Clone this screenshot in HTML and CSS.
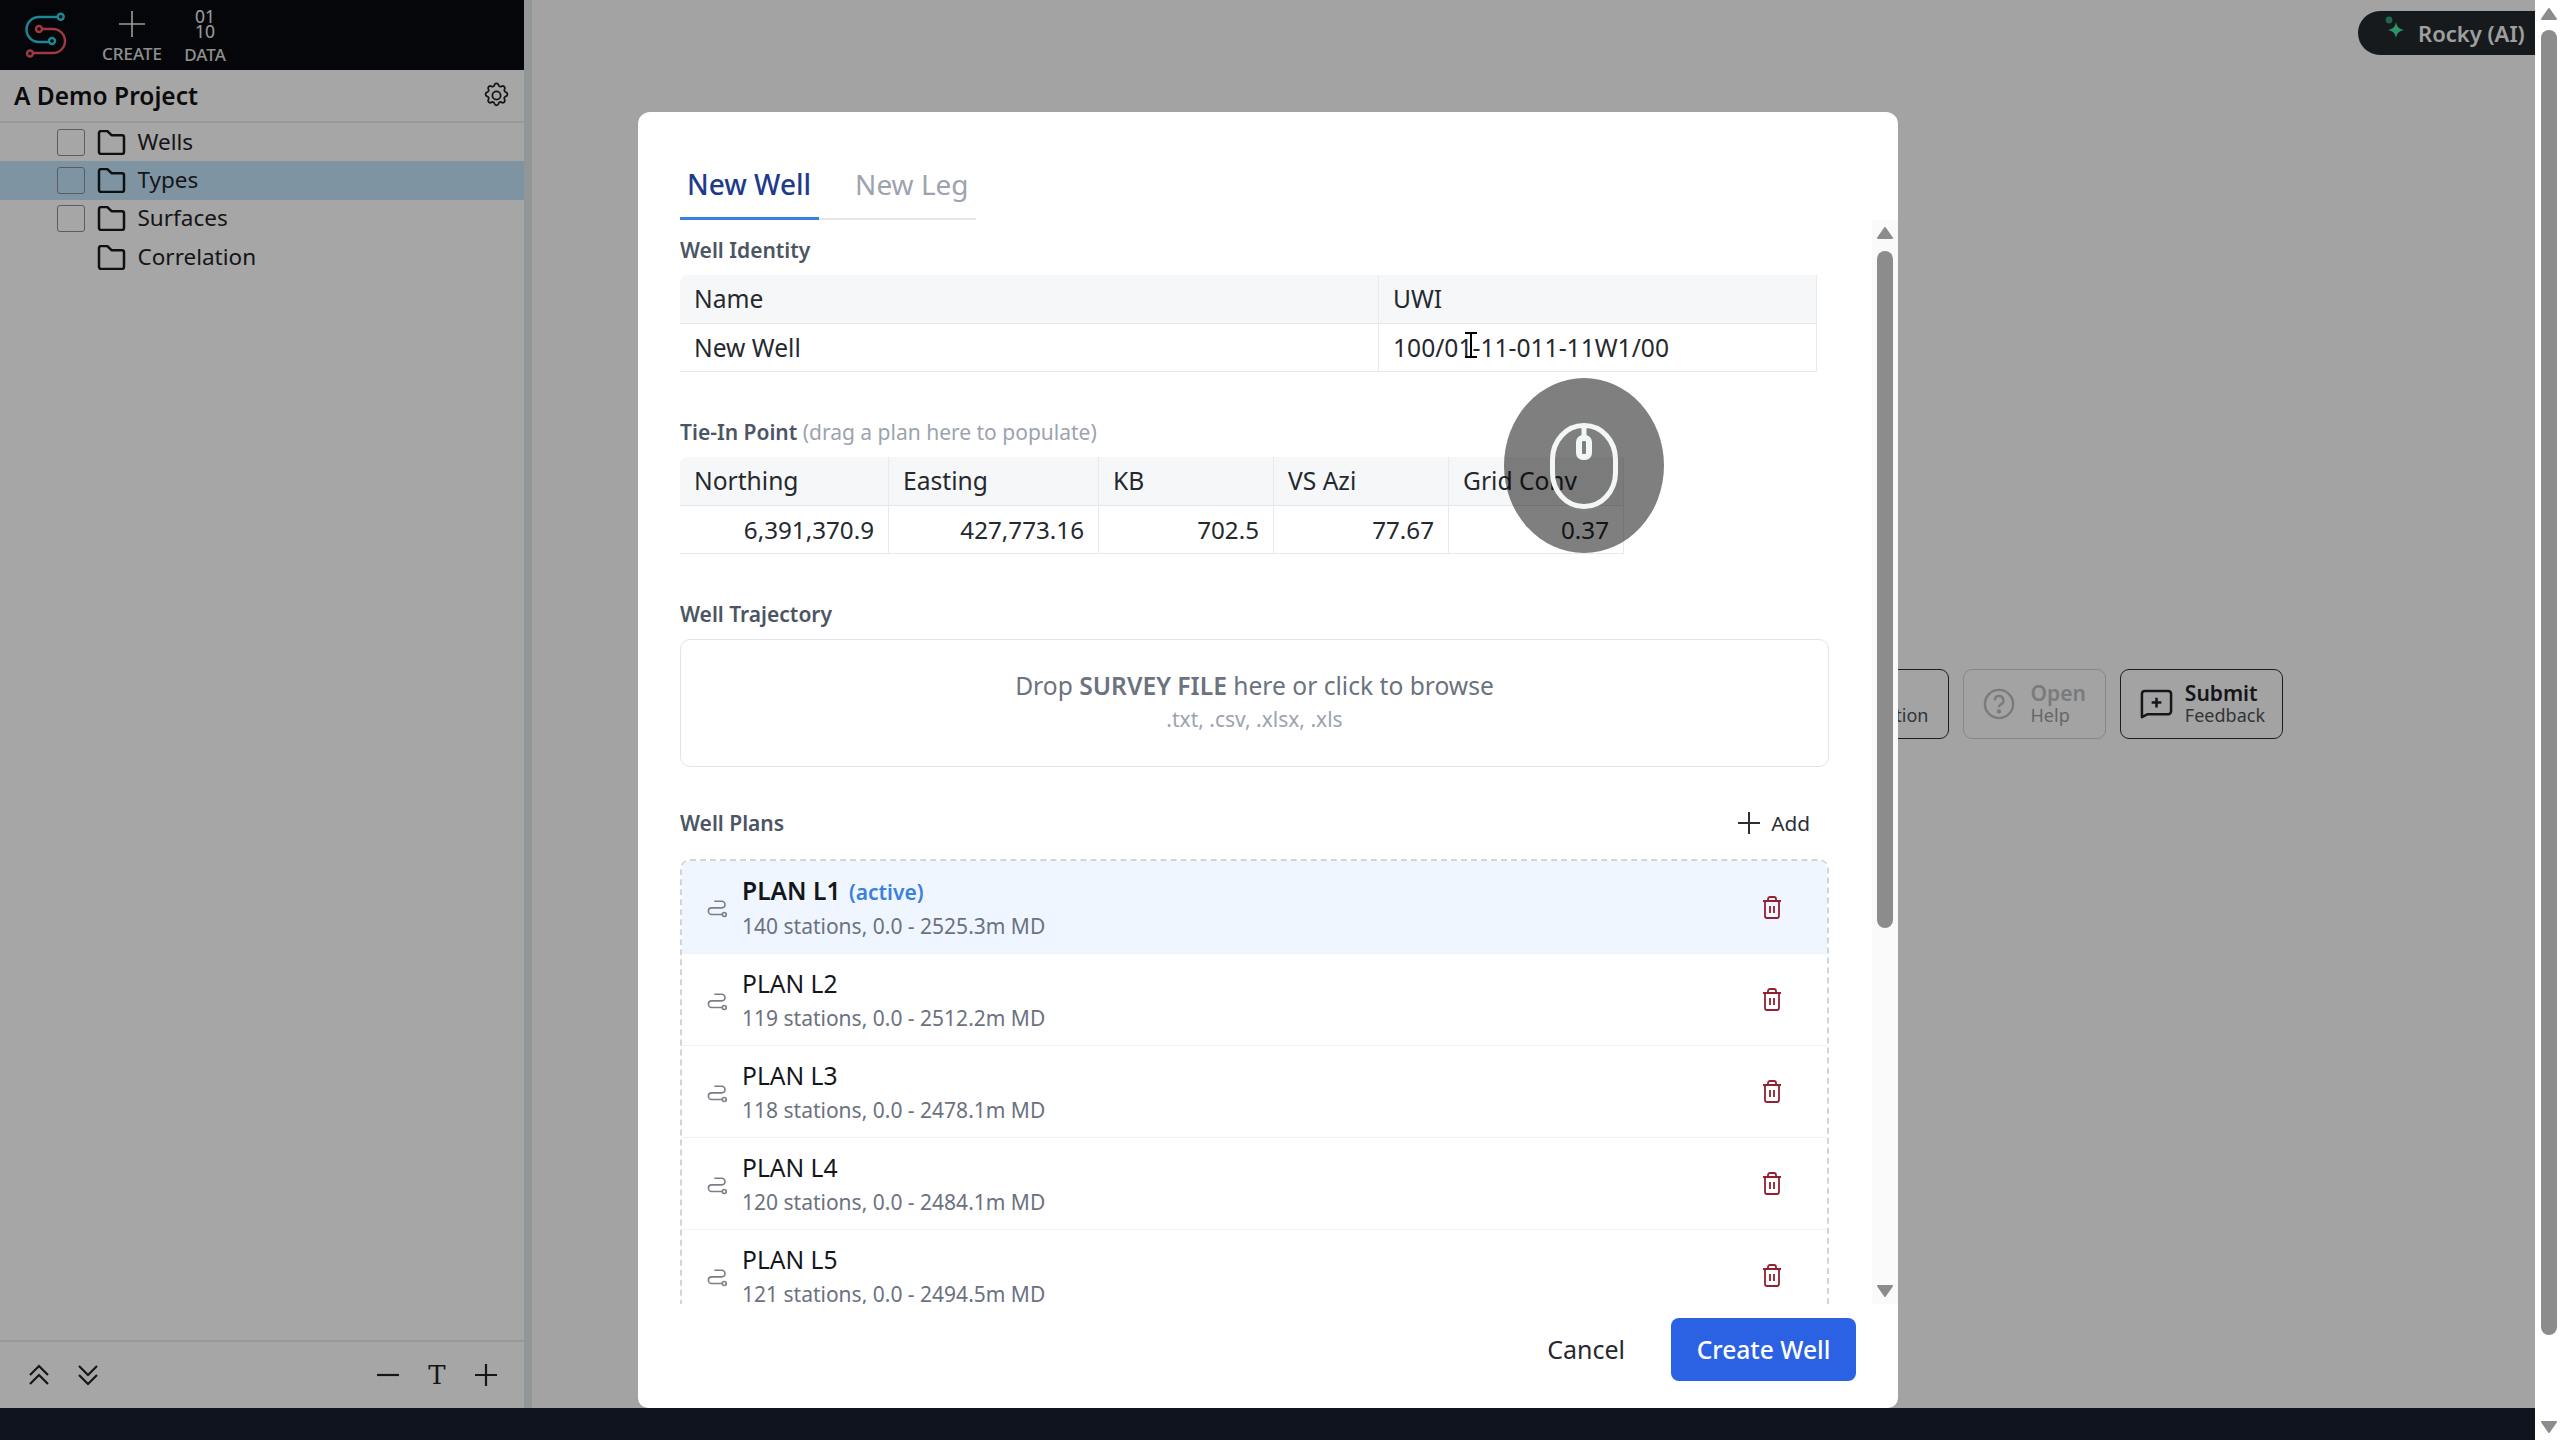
FILE: index.html
```html
<!DOCTYPE html>
<html lang="en">
<head>
<meta charset="utf-8">
<title>New Well</title>
<link rel="stylesheet" href="styles.css">
</head>
<body>
<div class="page">
  <div class="app">
    <div class="workspace">
      <aside class="sidebar">
        <div class="topbar">
          <svg class="logo" viewBox="0 0 70 70" width="70" height="70" fill="none" stroke-width="2.4">
            <g stroke="#2fd0e6">
              <circle cx="60.7" cy="16.7" r="3"/>
              <path d="M57.7 17H39a12.5 12.5 0 0 0 0 25H49"/>
              <circle cx="52" cy="41" r="3"/>
            </g>
            <g stroke="#f8566a">
              <circle cx="39" cy="29" r="3"/>
              <path d="M42 29H53a12 12 0 0 1 0 24H33"/>
              <circle cx="30" cy="53.5" r="3"/>
            </g>
          </svg>
          <button class="tool tool-create">
            <svg class="tool-icon" viewBox="0 0 26 28" width="26" height="28"><path d="M13 1V27M0 14H26"/></svg>
            <span class="tool-label">CREATE</span>
          </button>
          <button class="tool tool-data">
            <span class="binary">01<br>10</span>
            <span class="tool-label">DATA</span>
          </button>
        </div>
        <div class="project">
          <span class="project-name">A Demo Project</span>
          <svg class="gear" viewBox="0 0 24 24" width="29" height="29"><path d="M10.3 3.3c.4-1.7 3-1.7 3.4 0a1.7 1.7 0 0 0 2.6 1.1c1.5-.9 3.3.8 2.4 2.4a1.7 1.7 0 0 0 1 2.5c1.8.5 1.8 3 0 3.4a1.7 1.7 0 0 0-1 2.6c.9 1.5-.9 3.3-2.4 2.4a1.7 1.7 0 0 0-2.6 1c-.4 1.8-3 1.8-3.4 0a1.7 1.7 0 0 0-2.6-1c-1.5.9-3.3-.9-2.4-2.4a1.7 1.7 0 0 0-1-2.6c-1.8-.4-1.8-3 0-3.4a1.7 1.7 0 0 0 1-2.5c-.9-1.6.9-3.3 2.4-2.4a1.7 1.7 0 0 0 2.6-1.1Z"/><circle cx="12" cy="12" r="3.4"/></svg>
        </div>
        <ul class="tree">
          <li class="tree-row"><span class="check"></span><svg class="folder" viewBox="1 1 26 24" width="29" height="25"><path d="M4 2h6l4 4h10a2 2 0 0 1 2 2v14a2 2 0 0 1-2 2H4a2 2 0 0 1-2-2V4a2 2 0 0 1 2-2Z"/></svg><span class="tree-label">Wells</span></li>
          <li class="tree-row selected"><span class="check"></span><svg class="folder" viewBox="1 1 26 24" width="29" height="25"><path d="M4 2h6l4 4h10a2 2 0 0 1 2 2v14a2 2 0 0 1-2 2H4a2 2 0 0 1-2-2V4a2 2 0 0 1 2-2Z"/></svg><span class="tree-label">Types</span></li>
          <li class="tree-row"><span class="check"></span><svg class="folder" viewBox="1 1 26 24" width="29" height="25"><path d="M4 2h6l4 4h10a2 2 0 0 1 2 2v14a2 2 0 0 1-2 2H4a2 2 0 0 1-2-2V4a2 2 0 0 1 2-2Z"/></svg><span class="tree-label">Surfaces</span></li>
          <li class="tree-row"><span class="check check-none"></span><svg class="folder" viewBox="1 1 26 24" width="29" height="25"><path d="M4 2h6l4 4h10a2 2 0 0 1 2 2v14a2 2 0 0 1-2 2H4a2 2 0 0 1-2-2V4a2 2 0 0 1 2-2Z"/></svg><span class="tree-label">Correlation</span></li>
        </ul>
        <div class="side-footer">
          <div class="side-group">
            <svg class="foot-icon" viewBox="0 0 24 24" width="24" height="24"><path d="M3 12l9-9 9 9M3 21l9-9 9 9"/></svg>
            <svg class="foot-icon" viewBox="0 0 24 24" width="24" height="24"><path d="M3 3l9 9 9-9M3 12l9 9 9-9"/></svg>
          </div>
          <div class="side-group">
            <svg class="foot-icon" viewBox="0 0 24 24" width="24" height="24"><path d="M1 12H23"/></svg>
            <span class="type-t">T</span>
            <svg class="foot-icon" viewBox="0 0 24 24" width="24" height="24"><path d="M12 1V23M1 12H23"/></svg>
          </div>
        </div>
      </aside>
      <div class="resizer"></div>
      <main class="main">
        <div class="rocky">
          <svg class="sparkle" viewBox="0 0 26 30" width="26" height="30"><circle class="spark-dot" cx="7" cy="6" r="3.4"/><path class="spark-star" d="M14 8c1 5 3 7 8 8-5 1-7 3-8 8-1-5-3-7-8-8 5-1 7-3 8-8Z"/></svg>
          <span>Rocky (AI)</span>
        </div>
        <div class="actions">
          <div class="action">
            <span class="action-text"><b>Read</b><small>Documentation</small></span>
          </div>
          <div class="action disabled">
            <svg class="action-icon" viewBox="0 0 34 34" width="32" height="32"><circle cx="17" cy="17" r="15"/><path d="M12.5 13a4.6 4.6 0 1 1 6.6 4.2c-1.4.8-2.1 1.6-2.1 3.2"/><circle class="dot" cx="17" cy="25" r="1"/></svg>
            <span class="action-text"><b>Open</b><small>Help</small></span>
          </div>
          <div class="action action-compact">
            <svg class="action-icon" viewBox="0 0 34 34" width="33" height="33"><path d="M2 30V6a3 3 0 0 1 3-3h24a3 3 0 0 1 3 3v18a3 3 0 0 1-3 3H8Z"/><path d="M17 10V20M12 15H22"/></svg>
            <span class="action-text"><b>Submit</b><small>Feedback</small></span>
          </div>
        </div>
      </main>
    </div>
    <div class="statusbar"></div>
    <div class="backdrop"></div>
    <section class="modal">
      <nav class="tabs">
        <span class="tab active">New Well</span>
        <span class="tab">New Leg</span>
      </nav>
      <div class="modal-scroll">
        <div class="modal-body">
          <div class="section">
            <h3 class="label">Well Identity</h3>
            <div class="grid grid-identity">
              <div class="cell head">Name</div><div class="cell head">UWI</div>
              <div class="cell">New Well</div><div class="cell">100/01-11-011-11W1/00</div>
            </div>
          </div>
          <div class="section">
            <h3 class="label">Tie-In Point <span class="hint">(drag a plan here to populate)</span></h3>
            <div class="grid grid-tie">
              <div class="cell head">Northing</div><div class="cell head">Easting</div><div class="cell head">KB</div><div class="cell head">VS Azi</div><div class="cell head">Grid Conv</div>
              <div class="cell num">6,391,370.9</div><div class="cell num">427,773.16</div><div class="cell num">702.5</div><div class="cell num">77.67</div><div class="cell num">0.37</div>
            </div>
          </div>
          <div class="section section-tight">
            <h3 class="label">Well Trajectory</h3>
            <div class="dropzone">
              <p class="drop-main">Drop <b>SURVEY FILE</b> here or click to browse</p>
              <p class="drop-sub">.txt, .csv, .xlsx, .xls</p>
            </div>
          </div>
          <div class="plans-head">
            <h3 class="label label-flat">Well Plans</h3>
            <span class="add"><svg class="add-icon" viewBox="0 0 22 22" width="22" height="22"><path d="M11 0V22M0 11H22"/></svg>Add</span>
          </div>
          <ul class="plans">
            <li class="plan current">
              <svg class="plan-icon" viewBox="0 0 20 18" width="20" height="18"><path d="M15 14.5H4.7a3.3 3.3 0 0 1 0-6.6h10a3.3 3.3 0 0 0 0-6.6H7.3"/><circle cx="17.3" cy="14.5" r="2"/></svg>
              <div class="plan-text"><div class="plan-name"><b>PLAN L1</b> <span class="tag">(active)</span></div><div class="plan-sub">140 stations, 0.0 - 2525.3m MD</div></div>
              <svg class="trash" viewBox="0 0 20 23" width="20" height="23"><path d="M1 5H19M3 5V20a2 2 0 0 0 2 2H15a2 2 0 0 0 2-2V5M6 5V3a2 2 0 0 1 2-2H12a2 2 0 0 1 2 2V5M8 10V17M12 10V17"/></svg>
            </li>
            <li class="plan">
              <svg class="plan-icon" viewBox="0 0 20 18" width="20" height="18"><path d="M15 14.5H4.7a3.3 3.3 0 0 1 0-6.6h10a3.3 3.3 0 0 0 0-6.6H7.3"/><circle cx="17.3" cy="14.5" r="2"/></svg>
              <div class="plan-text"><div class="plan-name">PLAN L2</div><div class="plan-sub">119 stations, 0.0 - 2512.2m MD</div></div>
              <svg class="trash" viewBox="0 0 20 23" width="20" height="23"><path d="M1 5H19M3 5V20a2 2 0 0 0 2 2H15a2 2 0 0 0 2-2V5M6 5V3a2 2 0 0 1 2-2H12a2 2 0 0 1 2 2V5M8 10V17M12 10V17"/></svg>
            </li>
            <li class="plan">
              <svg class="plan-icon" viewBox="0 0 20 18" width="20" height="18"><path d="M15 14.5H4.7a3.3 3.3 0 0 1 0-6.6h10a3.3 3.3 0 0 0 0-6.6H7.3"/><circle cx="17.3" cy="14.5" r="2"/></svg>
              <div class="plan-text"><div class="plan-name">PLAN L3</div><div class="plan-sub">118 stations, 0.0 - 2478.1m MD</div></div>
              <svg class="trash" viewBox="0 0 20 23" width="20" height="23"><path d="M1 5H19M3 5V20a2 2 0 0 0 2 2H15a2 2 0 0 0 2-2V5M6 5V3a2 2 0 0 1 2-2H12a2 2 0 0 1 2 2V5M8 10V17M12 10V17"/></svg>
            </li>
            <li class="plan">
              <svg class="plan-icon" viewBox="0 0 20 18" width="20" height="18"><path d="M15 14.5H4.7a3.3 3.3 0 0 1 0-6.6h10a3.3 3.3 0 0 0 0-6.6H7.3"/><circle cx="17.3" cy="14.5" r="2"/></svg>
              <div class="plan-text"><div class="plan-name">PLAN L4</div><div class="plan-sub">120 stations, 0.0 - 2484.1m MD</div></div>
              <svg class="trash" viewBox="0 0 20 23" width="20" height="23"><path d="M1 5H19M3 5V20a2 2 0 0 0 2 2H15a2 2 0 0 0 2-2V5M6 5V3a2 2 0 0 1 2-2H12a2 2 0 0 1 2 2V5M8 10V17M12 10V17"/></svg>
            </li>
            <li class="plan">
              <svg class="plan-icon" viewBox="0 0 20 18" width="20" height="18"><path d="M15 14.5H4.7a3.3 3.3 0 0 1 0-6.6h10a3.3 3.3 0 0 0 0-6.6H7.3"/><circle cx="17.3" cy="14.5" r="2"/></svg>
              <div class="plan-text"><div class="plan-name">PLAN L5</div><div class="plan-sub">121 stations, 0.0 - 2494.5m MD</div></div>
              <svg class="trash" viewBox="0 0 20 23" width="20" height="23"><path d="M1 5H19M3 5V20a2 2 0 0 0 2 2H15a2 2 0 0 0 2-2V5M6 5V3a2 2 0 0 1 2-2H12a2 2 0 0 1 2 2V5M8 10V17M12 10V17"/></svg>
            </li>
          </ul>
        </div>
        <div class="inner-track">
          <svg class="arrow" viewBox="0 0 16 12" width="16" height="12"><path d="M8 1L15 11H1Z"/></svg>
          <div class="inner-thumb"></div>
          <svg class="arrow arrow-end" viewBox="0 0 16 12" width="16" height="12"><path d="M1 1H15L8 11Z"/></svg>
        </div>
      </div>
      <footer class="modal-foot">
        <button class="btn-cancel">Cancel</button>
        <button class="btn-create">Create Well</button>
      </footer>
    </section>
    <div class="click-ring">
      <svg class="mouse" viewBox="0 0 68 86" width="68" height="86"><rect x="2.5" y="2.5" width="63" height="81" rx="31" ry="34"/><path d="M34 2V14"/><rect class="wheel" x="29" y="15" width="10" height="19" rx="4"/></svg>
    </div>
    <svg class="ibeam" viewBox="0 0 14 26" width="14" height="26"><path d="M1 1H13M1 25H13M7 1V25"/></svg>
  </div>
  <div class="page-track">
    <svg class="arrow" viewBox="0 0 16 12" width="16" height="12"><path d="M8 1L15 11H1Z"/></svg>
    <div class="page-thumb"></div>
    <svg class="arrow" viewBox="0 0 16 12" width="16" height="12"><path d="M1 1H15L8 11Z"/></svg>
  </div>
</div>
</body>
</html>
```

FILE: styles.css
```css
* { box-sizing: border-box; }
html, body { margin: 0; height: 100%; overflow: hidden; }
body { font-family: "Noto Sans", "Open Sans", sans-serif; color: #1f2328; background: #fff; }
h3, p, ul { margin: 0; padding: 0; }
ul { list-style: none; }
button { font: inherit; border: 0; background: none; padding: 0; }

.page { display: flex; width: 2560px; height: 1440px; }
.app { position: relative; flex: 1; display: flex; flex-direction: column; min-width: 0; }
.workspace { flex: 1; display: flex; min-height: 0; }
.statusbar { height: 32px; background: #1a2030; }

/* sidebar */
.sidebar { width: 524px; flex: none; display: flex; flex-direction: column; background: #fff; }
.topbar { height: 70px; display: flex; background: #070a0e; color: #fff; }
.logo { flex: none; margin-right: 33px; }
.tool { display: flex; flex-direction: column; align-items: center; color: #f0f0f0; height: 70px; font-family: inherit; }
.tool-create { width: 58px; }
.tool-data { width: 40px; margin-left: 24px; }
.tool-icon { margin-top: 10px; fill: none; stroke: currentColor; stroke-width: 1.6; }
.binary { font-size: 17.5px; line-height: 15px; margin-top: 9px; height: 34px; text-align: center; }
.tool-label { font-size: 17px; line-height: 20px; margin-top: 2px; font-weight: 500; color: #dcdcdc; }
.tool-create .tool-label { margin-top: 6px; }
.project { height: 53px; display: flex; align-items: center; justify-content: space-between; padding: 0 13px 0 14px; border-bottom: 2px solid #ececec; }
.project-name { font-size: 24.5px; font-weight: 600; color: #111; }
.gear { fill: none; stroke: #1f2328; stroke-width: 1.5; stroke-linejoin: round; }
.tree { flex: 1; }
.tree-row { height: 38.4px; display: flex; align-items: center; padding-left: 57px; font-size: 22.5px; color: #1f2328; }
.tree-row.selected { background: #c2e4f9; }
.tree-label { margin-bottom: 2px; }
.check { width: 28px; height: 27px; border: 1.5px solid #8a8f94; border-radius: 3px; margin-right: 12px; flex: none; }
.check-none { visibility: hidden; }
.folder { flex: none; margin-right: 11.5px; fill: none; stroke: #16191d; stroke-width: 2.4; stroke-linejoin: round; }
.side-footer { height: 68px; flex: none; border-top: 2px solid #ececec; display: flex; align-items: center; justify-content: space-between; padding: 0 26px 0 27px; }
.side-group { display: flex; align-items: center; gap: 25px; }
.foot-icon { fill: none; stroke: #1f2328; stroke-width: 2.2; }
.type-t { width: 24px; text-align: center; font-family: "DejaVu Serif", serif; font-weight: 400; font-size: 26px; line-height: 24px; color: #1f2328; }
.resizer { width: 8px; background: #e2e8ea; border-left: 3px solid #dfe8ea; flex: none; }

/* main */
.main { position: relative; flex: 1; background: #fbfbfb; display: flex; align-items: center; justify-content: flex-end; padding-right: 252px; }
.rocky { position: absolute; top: 11px; right: 0; width: 177px; height: 44px; border-radius: 22px 0 0 22px; background: #22282c; color: #f4f4f4; font-size: 22px; font-weight: 600; display: flex; align-items: center; padding-left: 22px; }
.rocky span { margin-left: 10px; white-space: nowrap; }
.sparkle { flex: none; margin-top: -8px; margin-left: 2px; }
.spark-dot { fill: #2f9f70; }
.spark-star { fill: #46e69a; }
.actions { display: flex; gap: 14px; }
.action { height: 70px; padding: 0 19px; display: flex; align-items: center; gap: 16px; border: 1.5px solid #2a2d31; border-radius: 9px; }
.action-compact { padding: 0 17px 0 19px; gap: 12px; }
.action.disabled { border-color: #a9acb0; color: #8a8c8f; opacity: .55; }
.action-text { display: flex; flex-direction: column; line-height: 22px; }
.action-text b { font-size: 21px; font-weight: 600; }
.action-text small { font-size: 18px; color: #4b5056; }
.action-icon { fill: none; stroke: currentColor; stroke-width: 2.6; stroke-linejoin: round; flex: none; }
.action-icon .dot { fill: currentColor; }

/* modal */
.backdrop { position: absolute; inset: 0; background: rgba(0, 0, 0, .35); }
.modal { position: absolute; left: 638px; top: 112px; width: 1260px; height: 1296px; background: #fff; border-radius: 12px 12px 10px 10px; display: flex; flex-direction: column; }
.tabs { display: flex; gap: 28px; margin: 38px 0 0 42px; width: 296px; height: 70px; border-bottom: 2px solid #e5e7eb; flex: none; }
.tab { padding: 0 8px; font-size: 28px; line-height: 69px; height: 70px; color: #9ca3af; white-space: nowrap; }
.tab.active { color: #1e3a8a; font-weight: 500; border-bottom: 3px solid #3b7fe0; padding: 0 8px 0 7px; }
.modal-scroll { flex: 1; min-height: 0; display: flex; overflow: hidden; }
.modal-body { flex: 1; min-width: 0; padding: 16px 43px 0 42px; overflow: hidden; }
.inner-track { width: 26px; flex: none; background: #fafafa; display: flex; flex-direction: column; padding: 7px 5px 7px 5px; align-items: center; }
.arrow { flex: none; fill: #8c8c8c; stroke: #8c8c8c; stroke-width: 2; stroke-linejoin: round; }
.arrow-end { margin-top: auto; }
.inner-thumb { width: 16px; height: 677px; margin-top: 12px; background: #8c8c8c; border-radius: 8px; }
.section { margin-bottom: 46px; }
.section-tight { margin-bottom: 36px; }
.label { font-size: 21px; line-height: 28px; font-weight: 600; color: #4b5563; margin-bottom: 11px; }
.label-flat { margin-bottom: 0; }
.hint { font-weight: 400; color: #9ca3af; }
.grid { display: grid; font-size: 24.6px; color: #25292e; }
.grid-identity { grid-template-columns: 699px 438px; width: 1137px; }
.grid-tie { grid-template-columns: 209px 210px 175px 175px 175px; width: 944px; }
.cell { height: 48.5px; line-height: 48px; padding: 0 14px; border-right: 1px solid #e8eaee; border-bottom: 1px solid #e5e7eb; white-space: nowrap; }
.cell.head { background: #f6f7f9; }
.cell.num { text-align: right; font-size: 24.2px; }
.grid .cell.head:first-child { border-top-left-radius: 8px; }
.dropzone { height: 128px; border: 1.5px solid #e1e4e8; border-radius: 10px; text-align: center; padding-top: 29px; }
.drop-main { font-size: 24.6px; line-height: 34px; color: #6b7280; }
.drop-main b { font-weight: 600; }
.drop-sub { font-size: 21px; line-height: 30px; margin-top: 1px; color: #9ca3af; }
.plans-head { height: 40px; display: flex; align-items: center; justify-content: space-between; margin-bottom: 16px; padding-right: 19px; }
.add { display: flex; align-items: center; gap: 11px; font-size: 20.8px; color: #2b2f34; }
.add-icon { fill: none; stroke: currentColor; stroke-width: 2; }
.plans { border: 2.5px dashed #d1d5db; border-radius: 10px; }
.plan { height: 92px; display: flex; align-items: center; padding: 0 45px 0 25px; border-bottom: 1px solid #f0f1f3; }
.plan.current { height: 93px; background: #eff6ff; border-radius: 8px 8px 0 0; }
.plan-icon { flex: none; margin-right: 15px; margin-top: 4px; fill: none; stroke: #7a7f86; stroke-width: 1.6; }
.plan-text { flex: 1; min-width: 0; }
.plan-name { font-size: 24.6px; line-height: 34px; color: #14171a; }
.plan-name b { font-weight: 600; }
.tag { font-size: 21px; font-weight: 600; color: #3b7fe0; margin-left: 2px; }
.plan-sub { font-size: 21px; line-height: 30px; margin-top: 2px; color: #6b7280; }
.trash { flex: none; fill: none; stroke: #92202f; stroke-width: 1.8; stroke-linejoin: round; }
.modal-foot { height: 104px; flex: none; display: flex; align-items: center; justify-content: flex-end; gap: 46px; padding: 0 42px 14px 0; }
.btn-cancel { font-size: 25px; color: #25292e; }
.btn-create { width: 185px; height: 63px; border-radius: 8px; background: #2b62e3; color: #fff; font-size: 24.6px; font-weight: 500; }

/* recorder overlays */
.click-ring { position: absolute; left: 1504px; top: 378px; width: 160px; height: 175px; border-radius: 50%; background: rgba(0, 0, 0, .5); display: flex; justify-content: center; padding-top: 45px; }
.mouse { fill: none; stroke: #f2f6f4; stroke-width: 5; }
.mouse .wheel { fill: none; stroke-width: 6; }
.ibeam { position: absolute; left: 1464px; top: 332px; fill: none; stroke: #000; stroke-width: 2; }

/* page scrollbar */
.page-track { width: 25px; flex: none; background: #fff; display: flex; flex-direction: column; align-items: center; justify-content: space-between; padding: 8px 4px 7px 6px; }
.page-thumb { width: 16px; height: 1305px; margin-top: -4px; margin-bottom: 72px; background: #8c8c8c; border-radius: 8px; }
```
